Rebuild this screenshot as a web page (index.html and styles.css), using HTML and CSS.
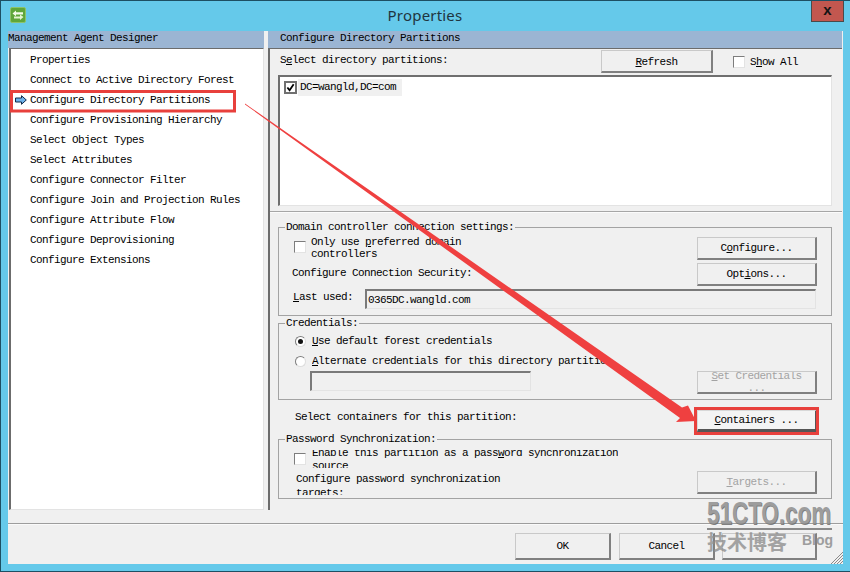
FILE: index.html
```html
<!DOCTYPE html>
<html lang="en">
<head>
<meta charset="utf-8">
<title>Properties</title>
<link rel="stylesheet" href="styles.css">
</head>
<body>
<div class="window">
  <header class="titlebar">
    <svg class="app-icon" width="16" height="16" viewBox="0 0 16 16"><rect x="0.5" y="0.5" width="15" height="15" rx="1.5" fill="#5fa63a" stroke="#8cc46a"/><path d="M2.5 6.5 6 3.5V5.2H13V7.6H6V9.2Z" fill="#f4fbe8"/><path d="M13.5 10 10 13V11.6H4V9.6H10V7.6Z" fill="#e4f4d0"/></svg>
    <h1 class="title">Properties</h1>
    <div class="close">x</div>
  </header>
  <div class="client">
    <div class="heads">
      <div class="head head-left">Management Agent Designer</div>
      <div class="head head-right">Configure Directory Partitions</div>
    </div>
    <div class="panes">
      <nav class="nav">
        <div class="nav-item">Properties</div>
        <div class="nav-item">Connect to Active Directory Forest</div>
        <div class="nav-item">
          <svg class="nav-arrow" width="12" height="10" viewBox="0 0 12 10"><path d="M0.5 3H6.5V0.7L11.3 5 6.5 9.3V7H0.5Z" fill="#6db2ea" stroke="#102a4a"/></svg>
          Configure Directory Partitions
        </div>
        <div class="nav-item">Configure Provisioning Hierarchy</div>
        <div class="nav-item">Select Object Types</div>
        <div class="nav-item">Select Attributes</div>
        <div class="nav-item">Configure Connector Filter</div>
        <div class="nav-item">Configure Join and Projection Rules</div>
        <div class="nav-item">Configure Attribute Flow</div>
        <div class="nav-item">Configure Deprovisioning</div>
        <div class="nav-item">Configure Extensions</div>
      </nav>
      <main class="content">
        <section class="top">
          <div class="top-row">
            <span class="top-label">S<u>e</u>lect directory partitions:</span>
            <div class="btn btn-refresh"><span><u>R</u>efresh</span></div>
            <span class="check show-all"></span>
            <span class="show-text">S<u>h</u>ow All</span>
          </div>
          <div class="listbox">
            <div class="list-row">
              <span class="list-check"><svg width="10" height="10" viewBox="0 0 10 10"><path d="M1.5 5 4 8 8.5 1.5" fill="none" stroke="#000" stroke-width="2"/></svg></span>
              <span class="list-text">DC=wangld,DC=com</span>
            </div>
          </div>
        </section>
        <section class="bottom">
          <fieldset class="group group-dc">
            <legend>Domain controller connection settings:</legend>
            <div class="dc-top">
              <div class="dc-left">
                <div class="check-row">
                  <span class="check"></span>
                  <span class="wrap-label">Only use <u>p</u>referred domain<br>controllers</span>
                </div>
                <div class="security">Configure Connection Security:</div>
              </div>
              <div class="btn-col">
                <div class="btn btn-configure"><span>C<u>o</u>nfigure...</span></div>
                <div class="btn btn-options"><span>Opt<u>i</u>ons...</span></div>
              </div>
            </div>
            <div class="last-row">
              <span class="last-label"><u>L</u>ast used:</span>
              <div class="field field-last">0365DC.wangld.com</div>
            </div>
          </fieldset>
          <fieldset class="group group-cred">
            <legend>Credentials:</legend>
            <div class="radio-row first"><span class="radio on"></span><span><u>U</u>se default forest credentials</span></div>
            <div class="radio-row"><span class="radio"></span><span class="clip-alt"><u>A</u>lternate credentials for this directory partition</span></div>
            <div class="cred-row">
              <div class="field field-cred"></div>
              <div class="btn btn-disabled btn-set"><span class="set-text"><u>S</u>et Credentials<br>...</span></div>
            </div>
          </fieldset>
          <div class="containers-row">
            <span class="containers-label">Select containers for this partition:</span>
            <div class="btn btn-containers"><span><u>C</u>ontainers ...</span></div>
          </div>
          <fieldset class="group group-pw">
            <legend>Password Synchronization:</legend>
            <div class="pw-cols">
              <div class="pw-left">
                <div class="check-row pw-check">
                  <span class="check"></span>
                  <span class="pw-clip"><span class="pw-lines">Enable this partition as a pass<u>w</u>ord synchronization<br>source</span></span>
                </div>
                <div class="pw-targets">Configure password synchronization<br>targets:</div>
              </div>
              <div class="btn btn-disabled btn-targets"><span><u>T</u>argets...</span></div>
            </div>
          </fieldset>
        </section>
      </main>
    </div>
    <footer class="footer">
      <div class="btn btn-foot"><span>OK</span></div>
      <div class="btn btn-foot"><span>Cancel</span></div>
      <div class="btn btn-foot btn-help"></div>
      <svg class="grip" width="13" height="13" viewBox="0 0 13 13"><path d="M13 1 1 13M13 4 4 13M13 7 7 13M13 10 10 13" stroke="#8a8a8a" stroke-width="1"/></svg>
    </footer>
  </div>
  <svg class="marks" width="850" height="572" viewBox="0 0 850 572">
    <rect class="mark-box" x="11.5" y="91.5" width="223" height="19.5"/>
    <rect class="mark-box" x="695.5" y="408.5" width="122" height="25"/>
    <path class="mark-arrow" d="M245 103.6 682 407.5 688 405.5 696 421 676 422 680 418 245 104.4Z"/>
  </svg>
  <div class="watermark">
    <div class="wm-logo">51CTO.com</div>
    <div class="wm-line"></div>
    <div class="wm-sub"><span class="wm-cn">技术博客</span><span class="wm-blog">Blog</span></div>
  </div>
</div>
</body>
</html>
```

FILE: styles.css
```css
* { box-sizing: border-box; }
html, body { margin: 0; padding: 0; }
body {
  width: 850px;
  height: 572px;
  overflow: hidden;
  font-family: "Liberation Mono", "Noto Sans CJK SC", monospace;
  font-size: 11px;
  letter-spacing: -0.6px;
  line-height: 14px;
  color: #000;
}
u { text-underline-offset: 1px; }

.window {
  position: relative;
  width: 850px;
  height: 572px;
  background: #65c9ea;
  border-top: 1px solid #1d4f63;
  border-left: 1px solid #1d4f63;
  border-bottom: 1px solid #1d4f63;
  padding: 0 7px 7px 7px;
  display: flex;
  flex-direction: column;
}

/* title bar */
.titlebar {
  height: 30px;
  flex: none;
  display: flex;
  align-items: flex-start;
  justify-content: center;
  position: relative;
}
.app-icon { position: absolute; left: 2px; top: 6px; }
.title {
  margin: 4px 0 0 -1px;
  font-family: "Noto Sans", sans-serif;
  font-size: 15px;
  font-weight: 400;
  letter-spacing: 0.2px;
  line-height: 20px;
  color: #1f3540;
}
.close {
  position: absolute;
  right: -1px;
  top: 0;
  width: 33px;
  height: 21px;
  background: #c2574f;
  border: 1px solid #4a4a4a;
  border-top: 0;
  font-family: "Liberation Sans", sans-serif;
  font-size: 15px;
  font-weight: 700;
  letter-spacing: 0;
  text-align: center;
  line-height: 17px;
  color: #141414;
}

/* client */
.client {
  flex: 1;
  min-height: 0;
  background: #f0f0f0;
  display: flex;
  flex-direction: column;
}
.heads {
  height: 17px;
  flex: none;
  display: flex;
  gap: 4px;
}
.head {
  background: #9bb5d3;
  line-height: 14px;
}
.head-left { width: 256px; }
.head-right { flex: 1; padding-left: 12px; margin-right: 1px; }

.panes {
  height: 462px;
  flex: none;
  display: flex;
  gap: 4px;
  margin-bottom: 13px;
}
.nav {
  width: 255px;
  flex: none;
  margin-left: 1px;
  background: #fff;
  border-top: 1px solid #6c6c6c;
  border-left: 2px solid #6c6c6c;
  border-right: 1px solid #e3e3e3;
  border-bottom: 1px solid #e3e3e3;
  padding-top: 1px;
}
.nav-item {
  height: 20px;
  padding: 3px 0 0 19px;
  position: relative;
}
.nav-arrow { position: absolute; left: 4px; top: 5px; }

.content {
  flex: 1;
  margin-right: 1px;
  border-top: 1px solid #6c6c6c;
  border-left: 2px solid #6c6c6c;
  display: flex;
  flex-direction: column;
}
.top {
  height: 163px;
  flex: none;
  border-bottom: 1px solid #a6a6a6;
  box-shadow: 0 1px 0 #fbfbfb;
  padding: 1px 10px 0 8px;
}
.top-row {
  height: 25px;
  display: flex;
  align-items: flex-start;
}
.top-label { margin: 3px 0 0 2px; width: 321px; }
.check {
  display: inline-block;
  flex: none;
  width: 12px;
  height: 12px;
  background: #fff;
  border: 1px solid #7d7d7d;
  border-right-color: #e3e3e3;
  border-bottom-color: #e3e3e3;
}
.show-all { margin: 6px 0 0 20px; }
.show-text { margin: 5px 0 0 5px; }

.btn {
  display: flex;
  align-items: center;
  justify-content: center;
  background: #f0f0f0;
  border: 1px solid #c9c9c9;
  border-right: 2px solid #808080;
  border-bottom: 2px solid #808080;
  text-align: center;
  flex: none;
}
.btn-refresh { width: 112px; height: 23px; padding-top: 1px; }

.listbox {
  height: 131px;
  background: #fff;
  border-top: 2px solid #6f6f6f;
  border-left: 2px solid #6f6f6f;
  border-right: 1px solid #e3e3e3;
  border-bottom: 1px solid #e3e3e3;
  padding: 2px 0 0 4px;
}
.list-row { display: flex; align-items: center; height: 17px; }
.list-check {
  width: 13px;
  height: 13px;
  border: 2px solid #707070;
  margin-right: 1px;
  display: flex;
  align-items: center;
  justify-content: center;
  background: #fff;
}
.list-check svg { width: 9px; height: 9px; }
.list-text { width: 104px; height: 17px; background: #f0f0f0; padding: 1px 0 0 2px; }

.bottom {
  flex: 1;
  padding: 9px 10px 0 8px;
  display: flex;
  flex-direction: column;
}

fieldset.group {
  margin: 0;
  padding: 0;
  min-width: 0;
  border: 1px solid #a3a3a3;
  flex: none;
}
.group legend {
  margin-left: 6px;
  padding: 0 1px;
  line-height: 13px;
  height: 13px;
}
.group-dc { height: 95px; }
fieldset.group-cred { height: 83px; margin-top: 1px; }
.group-pw { height: 66px; }

.dc-top { display: flex; height: 55px; }
.dc-left { width: 418px; padding-left: 13px; }
.check-row { display: flex; align-items: flex-start; }
.check-row .check { margin: 7px 5px 0 2px; }
.wrap-label { line-height: 12px; margin-top: 2px; }
.security { margin: 6px 0 0 0; }
.btn-col { display: flex; flex-direction: column; gap: 3px; margin-top: 3px; }
.btn-configure, .btn-options { width: 120px; height: 23px; }

.last-row { display: flex; align-items: flex-start; }
.last-label { margin: 1px 0 0 14px; width: 72px; }
.field {
  background: #f0f0f0;
  border-top: 2px solid #7a7a7a;
  border-left: 2px solid #7a7a7a;
  border-right: 1px solid #e3e3e3;
  border-bottom: 1px solid #e3e3e3;
  padding: 2px 0 0 1px;
}
.field-last { width: 451px; height: 20px; }

.radio-row { display: flex; align-items: center; height: 20px; padding-left: 16px; }
.radio-row.first { margin-top: 1px; }
.radio {
  width: 11px;
  height: 11px;
  border-radius: 50%;
  background: #fff;
  border: 1px solid #7d7d7d;
  border-right-color: #ddd;
  border-bottom-color: #ddd;
  margin-right: 6px;
  flex: none;
  display: flex;
  align-items: center;
  justify-content: center;
}
.radio.on::after {
  content: "";
  width: 5px;
  height: 5px;
  border-radius: 50%;
  background: #111;
}
.clip-alt { width: 293px; overflow: hidden; white-space: nowrap; }
.cred-row { display: flex; align-items: flex-start; padding-left: 31px; }
.field-cred { width: 221px; height: 20px; }
.btn-disabled { color: #a3a3a3; }
.btn-set {
  width: 120px;
  height: 23px;
  margin-left: 166px;
  align-items: flex-start;
  overflow: hidden;
}
.set-text { margin-top: -2px; line-height: 12px; }

.containers-row {
  height: 33px;
  flex: none;
  display: flex;
  align-items: flex-start;
}
.containers-label { width: 402px; margin: 10px 0 0 17px; }
.btn-containers {
  width: 120px;
  height: 22px;
  margin-top: 10px;
  border-color: #d8d8d8 #555 #555 #d8d8d8;
  border-bottom-width: 3px;
  background: #f4f4f4;
}

.pw-cols { display: flex; align-items: flex-start; }
.pw-left { width: 418px; height: 49px; overflow: hidden; }
.pw-check { height: 22px; padding-left: 13px; }
.pw-check .check { margin: 7px 6px 0 2px; }
.pw-clip { display: block; height: 18px; margin-top: 4px; overflow: hidden; }
.pw-lines { display: block; margin-top: -3px; line-height: 13px; white-space: nowrap; }
.pw-targets { margin: 4px 0 0 17px; line-height: 14px; }
.btn-targets { width: 120px; height: 23px; margin-top: 25px; }

.footer {
  flex: 1;
  position: relative;
  border-top: 1px solid #9d9d9d;
  box-shadow: inset 0 1px 0 #fafafa;
  display: flex;
  gap: 8px;
  padding: 9px 0 0 507px;
}
.btn-foot { width: 96px; height: 27px; }
.btn-help { margin-left: -1px; width: 95px; }
.grip { position: absolute; right: 0; bottom: 0; }

/* annotations painted on the screenshot */
.marks { position: absolute; left: -1px; top: -1px; pointer-events: none; }
.mark-box { fill: none; stroke: #e8403c; stroke-width: 3; }
.mark-arrow { fill: #ef4040; }

.watermark {
  position: absolute;
  left: 706px;
  top: 497px;
  width: 128px;
  color: #8f8f8f;
  letter-spacing: 0;
}
.wm-logo {
  font-family: "Liberation Sans", sans-serif;
  font-weight: 700;
  font-size: 32px;
  line-height: 30px;
  transform: scale(0.70, 1);
  transform-origin: left top;
  white-space: nowrap;
  text-shadow: 1px 1px 0 #6b6b6b;
  opacity: .85;
}
.wm-line { height: 2px; background: #8a8a8a; width: 125px; }
.wm-sub { display: flex; align-items: flex-start; }
.wm-cn {
  font-family: "Noto Sans CJK SC", sans-serif;
  font-size: 20px;
  font-weight: 700;
  line-height: 24px;
  width: 95px;
  white-space: nowrap;
  opacity: .8;
}
.wm-blog {
  font-family: "Liberation Sans", sans-serif;
  font-weight: 700;
  font-size: 14px;
  line-height: 14px;
  margin-top: 3px;
  opacity: .85;
}
```
